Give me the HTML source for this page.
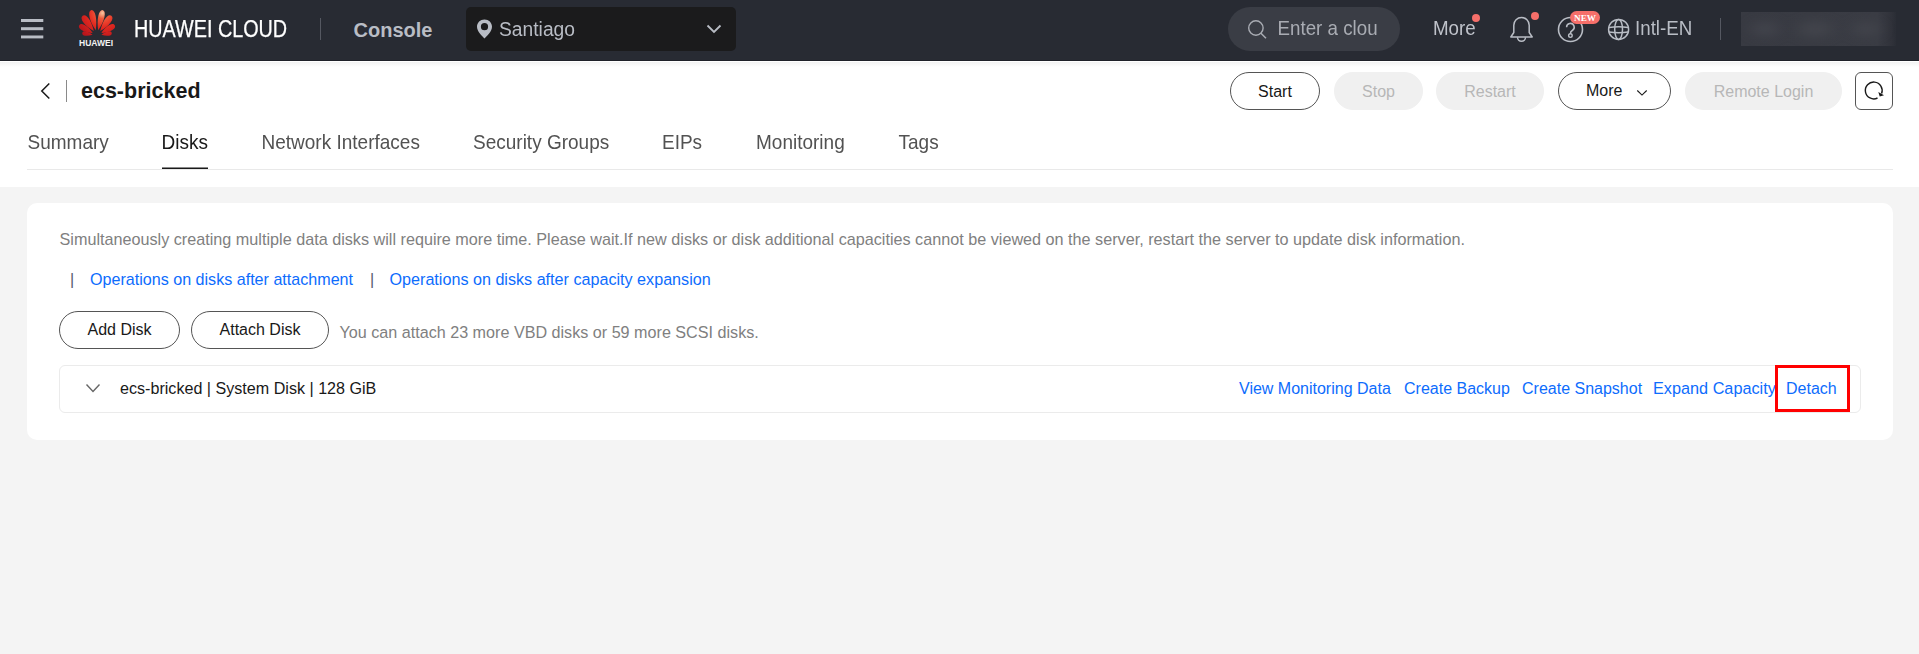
<!DOCTYPE html>
<html><head><meta charset="utf-8">
<style>
*{margin:0;padding:0;box-sizing:border-box}
html,body{width:1919px;height:654px;overflow:hidden;background:#f4f4f4;font-family:"Liberation Sans",sans-serif}
.a{position:absolute;white-space:nowrap}
#top{position:absolute;left:0;top:0;width:1919px;height:61px;background:#282b33;border-bottom:1px solid #1f2129}
#hdr{position:absolute;left:0;top:61px;width:1919px;height:126px;background:#fff}
#shd{position:absolute;left:0;top:62px;width:1919px;height:5px;background:linear-gradient(#f2f2f2,#fff)}
.t{line-height:1;}
.btn{position:absolute;height:38px;border-radius:19px;border:1px solid #555;background:#fff;color:#191919;font-size:16px;text-align:center;line-height:38px}
.dis{border-color:#f0f0f0;background:#f0f0f0;color:#b7b7b7}
.tab{position:absolute;top:132.5px;font-size:19px;color:#525252;line-height:20px;transform:scaleY(1.06);transform-origin:0 16.5px}
.link{color:#0d6cfd}
</style></head><body>
<div id="top">
  <!-- hamburger -->
  <svg class="a" style="left:0;top:0" width="60" height="60" viewBox="0 0 60 60"><g fill="#b9bdc5"><rect x="21" y="19" width="22.3" height="3"/><rect x="21" y="27.2" width="22.3" height="3"/><rect x="21" y="35.5" width="22.3" height="2.9"/></g></svg>
  <!-- logo -->
  <svg class="a" id="logo" style="left:78px;top:8px" width="38" height="30" viewBox="0 0 38 30"><defs><radialGradient id="lg" cx="24.5" cy="5" r="28" gradientUnits="userSpaceOnUse"><stop offset="0" stop-color="#f8c6a0"/><stop offset="0.2" stop-color="#ef5a3c"/><stop offset="0.5" stop-color="#e42a20"/><stop offset="1" stop-color="#b8141b"/></radialGradient></defs><g fill="url(#lg)"><path d="M17.76 22.14C19.45 11.23 17.15 1.24 13.15 2.17C9.16 3.09 11.46 13.08 17.76 22.14Z"/><path d="M20.24 22.14C26.54 13.08 28.84 3.09 24.85 2.17C20.85 1.24 18.55 11.23 20.24 22.14Z"/><path d="M15.77 23.05C13.74 12.78 8.16 5.09 4.60 7.68C1.04 10.27 6.62 17.95 15.77 23.05Z"/><path d="M22.23 23.05C31.38 17.95 36.96 10.27 33.40 7.68C29.84 5.09 24.26 12.78 22.23 23.05Z"/><path d="M14.67 25.00C9.96 17.66 3.25 13.79 1.25 17.25C-0.75 20.71 5.96 24.59 14.67 25.00Z"/><path d="M23.33 25.00C32.04 24.59 38.75 20.71 36.75 17.25C34.75 13.79 28.04 17.66 23.33 25.00Z"/><path d="M14.57 26.72C9.92 22.85 4.75 21.94 4.23 24.90C3.71 27.85 8.88 28.76 14.57 26.72Z"/><path d="M23.43 26.72C29.12 28.76 34.29 27.85 33.77 24.90C33.25 21.94 28.08 22.85 23.43 26.72Z"/></g></svg>
  <div class="a" style="left:79px;top:37.8px;font-size:8.5px;font-weight:bold;color:#f2f2f2;line-height:10px">HUAWEI</div>
  <div class="a t" style="left:134px;top:17.7px;font-size:23px;color:#fff;-webkit-text-stroke:0.25px #fff;transform:scaleX(0.86);transform-origin:0 0">HUAWEI CLOUD</div>
  <div class="a" style="left:320px;top:18px;width:1px;height:22px;background:#555861"></div>
  <div class="a t" style="left:353.5px;top:20px;font-size:20px;font-weight:bold;color:#b9bdc5">Console</div>
  <!-- region -->
  <div class="a" style="left:466px;top:7px;width:270px;height:44px;border-radius:5px;background:#1b1b1c"></div>
  <svg class="a" style="left:476px;top:19px" width="17" height="20" viewBox="0 0 17 20"><path d="M8.5 0.5C4.2 0.5 1 3.7 1 7.8c0 4.5 5.2 9.6 7.5 11.7 2.3-2.1 7.5-7.2 7.5-11.7C16 3.7 12.8 0.5 8.5 0.5z M8.5 4.1a3.6 3.6 0 1 1 0 7.2 3.6 3.6 0 1 1 0-7.2z" fill="#b9bdc5" fill-rule="evenodd"/></svg>
  <div class="a t" style="left:499px;top:19.5px;font-size:19.25px;color:#b9bdc5;transform:scaleY(1.08);transform-origin:0 0.8465em">Santiago</div>
  <svg class="a" style="left:706px;top:24px" width="16" height="10" viewBox="0 0 16 10"><path d="M1.5 1.5L8 8l6.5-6.5" stroke="#b9bdc5" stroke-width="1.8" fill="none"/></svg>
  <!-- search -->
  <div class="a" style="left:1228px;top:7px;width:172px;height:44px;border-radius:22px;background:#3a3d45"></div>
  <svg class="a" style="left:1247px;top:19px" width="21" height="21" viewBox="0 0 21 21"><circle cx="8.9" cy="9" r="7.2" stroke="#a9acb3" stroke-width="1.4" fill="none"/><path d="M14 14.3l5 5" stroke="#a9acb3" stroke-width="1.5"/></svg>
  <div class="a t" style="left:1277.5px;top:19.5px;font-size:18.75px;color:#a9acb3;transform:scaleY(1.08);transform-origin:0 0.8465em">Enter a clou</div>
  <div class="a t" style="left:1433px;top:19.5px;font-size:18.75px;color:#bfc2ca;transform:scaleY(1.08);transform-origin:0 0.8465em">More</div>
  <div class="a" style="left:1472px;top:14px;width:8px;height:8px;border-radius:50%;background:#f66f6a"></div>
  <!-- bell -->
  <svg class="a" style="left:1509px;top:16px" width="25" height="28" viewBox="0 0 25 28"><path d="M1.8 21L4.8 16.5V9.2A7.7 7.7 0 0 1 20.2 9.2V16.5L23.2 21Z" stroke="#b9bdc5" stroke-width="1.5" fill="none" stroke-linejoin="round"/><path d="M8.5 21.3A4 4 0 0 0 16.5 21.3" stroke="#b9bdc5" stroke-width="1.5" fill="none"/></svg>
  <div class="a" style="left:1531px;top:12px;width:8px;height:8px;border-radius:50%;background:#f66f6a"></div>
  <!-- help -->
  <svg class="a" style="left:1557px;top:16px" width="27" height="27" viewBox="0 0 27 27"><circle cx="13.5" cy="13.5" r="12" stroke="#b9bdc5" stroke-width="1.6" fill="none"/><path d="M9.6 11.3A3.8 3.8 0 1 1 15.3 14.5Q13.4 15.6 13.4 17.7" stroke="#b9bdc5" stroke-width="1.5" fill="none"/><circle cx="13.4" cy="19.6" r="1.8" stroke="#b9bdc5" stroke-width="1.4" fill="none"/></svg>
  <div class="a" style="left:1570px;top:11px;width:30px;height:13px;border-radius:7px;background:#f66f6a;color:#fff;font-family:'Liberation Serif',serif;font-weight:bold;font-size:9.2px;line-height:15px;text-align:center">NEW</div>
  <!-- globe -->
  <svg class="a" style="left:1607px;top:18px" width="23" height="23" viewBox="0 0 23 23"><circle cx="11.6" cy="11.4" r="10" stroke="#b9bdc5" stroke-width="1.5" fill="none"/><ellipse cx="11.6" cy="11.4" rx="3.9" ry="10" stroke="#b9bdc5" stroke-width="1.5" fill="none"/><path d="M2 9.4Q11.6 7.9 21.2 9.4M2 14Q11.6 15.5 21.2 14" stroke="#b9bdc5" stroke-width="1.5" fill="none"/></svg>
  <div class="a t" style="left:1635px;top:20px;font-size:18.75px;color:#b9bdc5;transform:scaleY(1.08);transform-origin:0 0.8465em">Intl-EN</div>
  <div class="a" style="left:1720px;top:18px;width:1px;height:22px;background:#555861"></div>
  <div class="a" style="left:1741px;top:12px;width:155px;height:34px;overflow:hidden;background:linear-gradient(90deg,#383a42 0%,#3a3c44 88%,#30323a 97%,#2a2d35 100%)"><div style="position:absolute;left:-10px;top:-10px;width:175px;height:54px;filter:blur(5px);background:radial-gradient(ellipse 22px 10px at 34px 27px,#45474f,rgba(69,71,79,0)),radial-gradient(ellipse 26px 11px at 84px 27px,#46484f,rgba(70,72,79,0)),radial-gradient(ellipse 22px 10px at 135px 27px,#44464d,rgba(68,70,77,0))"></div></div>
</div>
<div id="hdr"></div><div id="shd"></div>
<!-- header content -->
<svg class="a" style="left:39px;top:82px" width="13" height="18" viewBox="0 0 13 18"><path d="M10.3 1.5L2.8 9l7.5 7.5" stroke="#191919" stroke-width="1.5" fill="none"/></svg>
<div class="a" style="left:66px;top:80px;width:1px;height:22px;background:#8a8a8a"></div>
<div class="a t" style="left:81px;top:81px;font-size:21.5px;font-weight:bold;color:#191919">ecs-bricked</div>

<div class="btn" style="left:1230px;top:72px;width:90px">Start</div>
<div class="btn dis" style="left:1334px;top:72px;width:89px">Stop</div>
<div class="btn dis" style="left:1436px;top:72px;width:108px">Restart</div>
<div class="btn" style="left:1558px;top:72px;width:113px;text-align:left;padding-left:27px;line-height:36px">More<svg style="position:absolute;left:76.5px;top:15.5px" width="12" height="8" viewBox="0 0 12 8"><path d="M1.3 1.5l4.7 4.6 4.7-4.6" stroke="#191919" stroke-width="1.1" fill="none"/></svg></div>
<div class="btn dis" style="left:1685px;top:72px;width:157px">Remote Login</div>
<div class="btn" style="left:1855px;top:72px;width:38px;border-radius:6px"><svg style="position:absolute;left:-1px;top:-1px" width="38" height="38" viewBox="0 0 38 38"><path d="M22.5 26A8.4 8.4 0 1 1 26.6 21.5" stroke="#191919" stroke-width="1.4" fill="none"/><path d="M23.3 20L29 23.3 24.7 24.6Z" fill="#191919"/></svg></div>

<div class="tab" style="left:27.5px">Summary</div>
<div class="tab" style="left:161.5px;color:#191919">Disks</div>
<div class="tab" style="left:261.5px">Network Interfaces</div>
<div class="tab" style="left:473px">Security Groups</div>
<div class="tab" style="left:662px">EIPs</div>
<div class="tab" style="left:756px">Monitoring</div>
<div class="tab" style="left:898.5px">Tags</div>
<div class="a" style="left:27px;top:169px;width:1866px;height:1px;background:#e9e9e9"></div>
<div class="a" style="left:162px;top:167px;width:46px;height:2px;background:linear-gradient(#8a8a8a 50%,#191919 50%)"></div>

<!-- card -->
<div class="a" style="left:27px;top:203px;width:1866px;height:237px;background:#fff;border-radius:10px"></div>
<div class="a t" style="left:59.5px;top:231px;font-size:16.2px;color:#808080">Simultaneously creating multiple data disks will require more time. Please wait.If new disks or disk additional capacities cannot be viewed on the server, restart the server to update disk information.</div>
<div class="a t" style="left:70px;top:272px;font-size:16px;color:#575d6c">|</div>
<div class="a t link" style="left:90px;top:271px;font-size:16.1px">Operations on disks after attachment</div>
<div class="a t" style="left:370px;top:272px;font-size:16px;color:#575d6c">|</div>
<div class="a t link" style="left:389.5px;top:271px;font-size:16.15px">Operations on disks after capacity expansion</div>

<div class="btn" style="left:59px;top:311px;width:121px;line-height:36px">Add Disk</div>
<div class="btn" style="left:191px;top:311px;width:138px;line-height:36px">Attach Disk</div>
<div class="a t" style="left:339.5px;top:324px;font-size:16.15px;color:#808080">You can attach 23 more VBD disks or 59 more SCSI disks.</div>

<div class="a" style="left:59px;top:365px;width:1802px;height:48px;border:1px solid #ebebeb;border-radius:6px"></div>
<svg class="a" style="left:85px;top:383px" width="16" height="11" viewBox="0 0 16 11"><path d="M1.5 1.5l6.5 7 6.5-7" stroke="#666" stroke-width="1.4" fill="none"/></svg>
<div class="a t" style="left:120px;top:380px;font-size:16.12px;color:#191919">ecs-bricked | System Disk | 128 GiB</div>
<div class="a t link" style="left:1239px;top:381px;font-size:16px">View Monitoring Data</div>
<div class="a t link" style="left:1404px;top:381px;font-size:16px">Create Backup</div>
<div class="a t link" style="left:1522px;top:381px;font-size:16px">Create Snapshot</div>
<div class="a t link" style="left:1653px;top:380px;font-size:16.25px">Expand Capacity</div>
<div class="a t link" style="left:1786px;top:381px;font-size:16px">Detach</div>
<div class="a" style="left:1775px;top:365px;width:75px;height:47px;border:3px solid #ff0000"></div>
</body></html>
